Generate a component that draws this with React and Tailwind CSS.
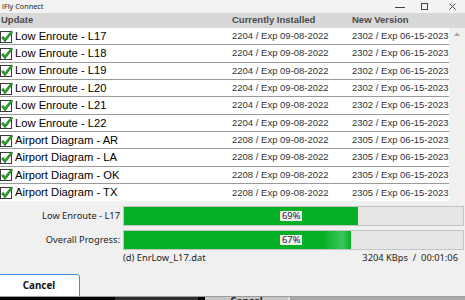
import React from "react";

const rows = [
  ["Low Enroute - L17", "2204 / Exp 09-08-2022", "2302 / Exp 06-15-2023"],
  ["Low Enroute - L18", "2204 / Exp 09-08-2022", "2302 / Exp 06-15-2023"],
  ["Low Enroute - L19", "2204 / Exp 09-08-2022", "2302 / Exp 06-15-2023"],
  ["Low Enroute - L20", "2204 / Exp 09-08-2022", "2302 / Exp 06-15-2023"],
  ["Low Enroute - L21", "2204 / Exp 09-08-2022", "2302 / Exp 06-15-2023"],
  ["Low Enroute - L22", "2204 / Exp 09-08-2022", "2302 / Exp 06-15-2023"],
  ["Airport Diagram - AR", "2208 / Exp 09-08-2022", "2305 / Exp 06-15-2023"],
  ["Airport Diagram - LA", "2208 / Exp 09-08-2022", "2305 / Exp 06-15-2023"],
  ["Airport Diagram - OK", "2208 / Exp 09-08-2022", "2305 / Exp 06-15-2023"],
  ["Airport Diagram - TX", "2208 / Exp 09-08-2022", "2305 / Exp 06-15-2023"],
];

function Check() {
  return (
    <svg width="13" height="13" viewBox="0 0 13 13" className="shrink-0">
      <rect x="0.5" y="1.5" width="11" height="11" fill="#fff" stroke="#3a3a3a" strokeWidth="1" />
      <path d="M2.2 6.8 L5 10.2 L12.2 1.2" fill="none" stroke="#1d7a1d" strokeWidth="2.6" strokeLinejoin="miter" />
      <path d="M2.4 6.9 L5 9.9 L12 1.4" fill="none" stroke="#2fae2f" strokeWidth="1.2" />
    </svg>
  );
}

function Bar({ label, pct, glow }) {
  return (
    <div className="flex items-center h-[20px]">
      <div className="w-[120px] text-right text-[9.3px] text-[#222]">{label}</div>
      <div className="ml-[3px] w-[341px] h-full border border-[#c4c4c4] bg-[#e6e6e6] relative">
        <div
          className={glow ? "h-full bg-[linear-gradient(90deg,#06b025_0%,#06b025_88%,#3cc45c_96%,#06b025_100%)]" : "h-full bg-[#06b025]"}
          style={{ width: pct + "%" }}
        />
        <span className="absolute left-[156px] top-1/2 -translate-y-1/2 h-[10px] px-[2px] flex items-center bg-[#f2f2f2] text-[9.3px] text-[#222] leading-none">
          {pct}%
        </span>
      </div>
    </div>
  );
}

export default function App() {
  return (
    <div
      className="w-[465px] h-[300px] bg-[#f0f0f0] overflow-hidden flex flex-col"
      style={{ fontFamily: '"Noto Sans", sans-serif' }}
    >
      {/* title bar */}
      <div className="h-[13px] flex items-center justify-between bg-[#f3f3f3] shrink-0">
        <span className="pl-[2px] text-[7.3px] text-[#222] leading-none">iFly Connect</span>
        <div className="flex items-center h-full">
          <svg width="10" height="10" viewBox="0 0 10 10" className="mr-[16px]">
            <line x1="0" y1="5.5" x2="10" y2="5.5" stroke="#444" strokeWidth="1" />
          </svg>
          <svg width="7" height="7" viewBox="0 0 7 7" className="mr-[21px]">
            <rect x="0.5" y="0.5" width="6" height="6" fill="none" stroke="#444" strokeWidth="1" />
          </svg>
          <svg width="7" height="7" viewBox="0 0 7 7" className="mr-[9px]">
            <path d="M0.5 0.5 L6.5 6.5 M6.5 0.5 L0.5 6.5" stroke="#444" strokeWidth="1" />
          </svg>
        </div>
      </div>

      {/* header */}
      <div
        className="h-[15px] bg-[#d8d8d8] flex items-center text-[9.5px] font-bold text-[#4a4a4a] shrink-0"
        style={{ fontFamily: '"Liberation Sans", Arial, sans-serif' }}
      >
        <div className="w-[232px] pl-[1px]">Update</div>
        <div className="w-[120px]">Currently Installed</div>
        <div>New Version</div>
      </div>

      {/* list */}
      <div className="flex shrink-0" style={{ fontFamily: '"Liberation Sans", Arial, sans-serif' }}>
        <div className="w-[449px] bg-white">
          {rows.map((r, i) => (
            <div
              key={i}
              className={
                "h-[17.35px] flex items-center box-border " +
                (i < rows.length - 1 ? "border-b border-[#9a9a9a]" : "")
              }
            >
              <Check />
              <div className="w-[219px] pl-[2px] text-[11.2px] text-black whitespace-nowrap">{r[0]}</div>
              <div className="w-[120px] text-[9.5px] text-[#333] whitespace-nowrap">{r[1]}</div>
              <div className="text-[9.5px] text-[#333] whitespace-nowrap">{r[2]}</div>
            </div>
          ))}
        </div>
        <div className="flex-1 flex justify-center pt-[4px]">
          <svg width="6" height="4" viewBox="0 0 6 4">
            <path d="M0 4 L3 0.5 L6 4 Z" fill="#a8a8a8" />
          </svg>
        </div>
      </div>

      {/* progress */}
      <div className="flex flex-col gap-[4px] pt-[4.5px] shrink-0">
        <Bar label="Low Enroute - L17" pct={69} />
        <Bar label="Overall Progress:" pct={67} glow />
      </div>

      <div className="flex items-center h-[13px] mt-[2px] text-[9.3px] text-[#222] shrink-0">
        <span className="ml-[123px]">(d) EnrLow_L17.dat</span>
        <span className="ml-auto mr-[7px] whitespace-pre">3204 KBps  /  00:01:06</span>
      </div>

      {/* cancel */}
      <div className="mt-[6px] h-[25px] shrink-0">
        <button className="-ml-[2px] w-[82px] h-[25px] bg-white border border-[#3c8fe0] rounded-[3px] text-[9.8px] font-bold text-[#111]">
          Cancel
        </button>
      </div>

      {/* bottom strip (underlying window) */}
      <div className="flex-1 flex overflow-hidden border-t border-[#9c9c9c]">
        <div className="w-[115px] bg-black" />
        <div className="w-[83px] bg-[#2e2e2e]" />
        <div className="w-[7px] bg-black" />
        <div className="w-[83px] bg-[#c6c6c6] relative overflow-hidden">
          <span className="absolute left-0 right-0 top-[0px] text-center text-[9.8px] font-bold text-[#222] leading-[9px]">
            Cancel
          </span>
        </div>
        <div className="w-[2px] bg-[#e0e0e0]" />
        <div className="flex-1 bg-[#a9a9a9]" />
      </div>
    </div>
  );
}
